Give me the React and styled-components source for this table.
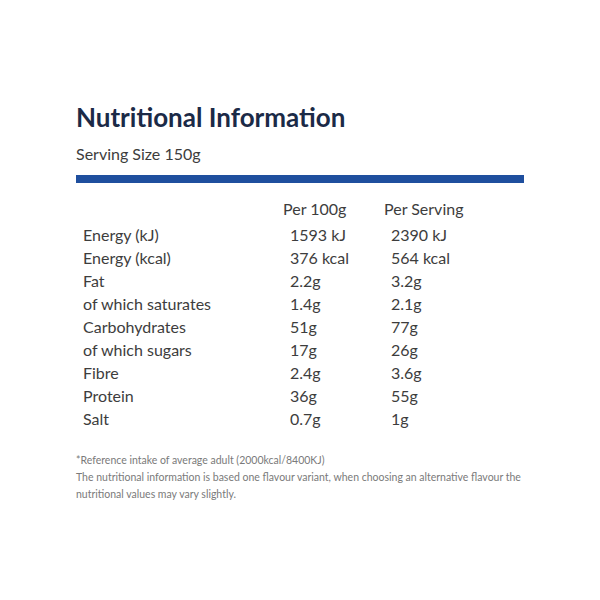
import styled, { createGlobalStyle } from "styled-components";

const GlobalStyle = createGlobalStyle`
  html, body {
    margin: 0;
    padding: 0;
    background: #ffffff;
  }
  body {
    font-family: Lato, "Open Sans", sans-serif;
  }
`;

const rows = [
  ["Energy (kJ)", "1593 kJ", "2390 kJ"],
  ["Energy (kcal)", "376 kcal", "564 kcal"],
  ["Fat", "2.2g", "3.2g"],
  ["of which saturates", "1.4g", "2.1g"],
  ["Carbohydrates", "51g", "77g"],
  ["of which sugars", "17g", "26g"],
  ["Fibre", "2.4g", "3.6g"],
  ["Protein", "36g", "55g"],
  ["Salt", "0.7g", "1g"],
];

function App() {
  return (
    <>
      <GlobalStyle />
      <Panel>
        <Title>Nutritional Information</Title>
        <Serving>Serving Size 150g</Serving>
        <Bar />
        <Table>
          <thead>
            <tr>
              <HeadCell />
              <HeadCell>Per 100g</HeadCell>
              <HeadCell>Per Serving</HeadCell>
            </tr>
          </thead>
          <tbody>
            {rows.map(([label, per100, perServing]) => (
              <tr key={label}>
                <Cell>{label}</Cell>
                <Cell>{per100}</Cell>
                <Cell>{perServing}</Cell>
              </tr>
            ))}
          </tbody>
        </Table>
        <Notes>
          <p>*Reference intake of average adult (2000kcal/8400KJ)</p>
          <p>
            The nutritional information is based one flavour variant, when
            choosing an alternative flavour the nutritional values may vary
            slightly.
          </p>
        </Notes>
      </Panel>
    </>
  );
}

export default App;

const Panel = styled.div`
  width: 448px;
  margin: 0 auto;
  padding-top: 101px;
`;

const Title = styled.h1`
  margin: 0;
  font-size: 26px;
  line-height: 32px;
  font-weight: 700;
  color: #1b2a47;
`;

const Serving = styled.div`
  margin-top: 10px;
  font-size: 16px;
  line-height: 22px;
  color: #3d3d3d;
`;

const Bar = styled.div`
  margin-top: 10px;
  height: 8px;
  background: #1f4f9e;
`;

const Table = styled.table`
  margin-top: 10px;
  border-collapse: collapse;
  font-size: 16px;
  color: #3d3d3d;
`;

const HeadCell = styled.th`
  padding: 0;
  text-align: left;
  font-weight: 400;
  height: 30px;
  &:first-child {
    width: 207px;
  }
  &:nth-child(2) {
    width: 101px;
  }
`;

const Cell = styled.td`
  height: 23px;
  line-height: 23px;
  padding: 0 0 0 7px;
`;

const Notes = styled.div`
  margin-top: 22px;
  font-size: 10.5px;
  line-height: 17px;
  color: #7a7a7a;

  p {
    margin: 0;
  }
`;
